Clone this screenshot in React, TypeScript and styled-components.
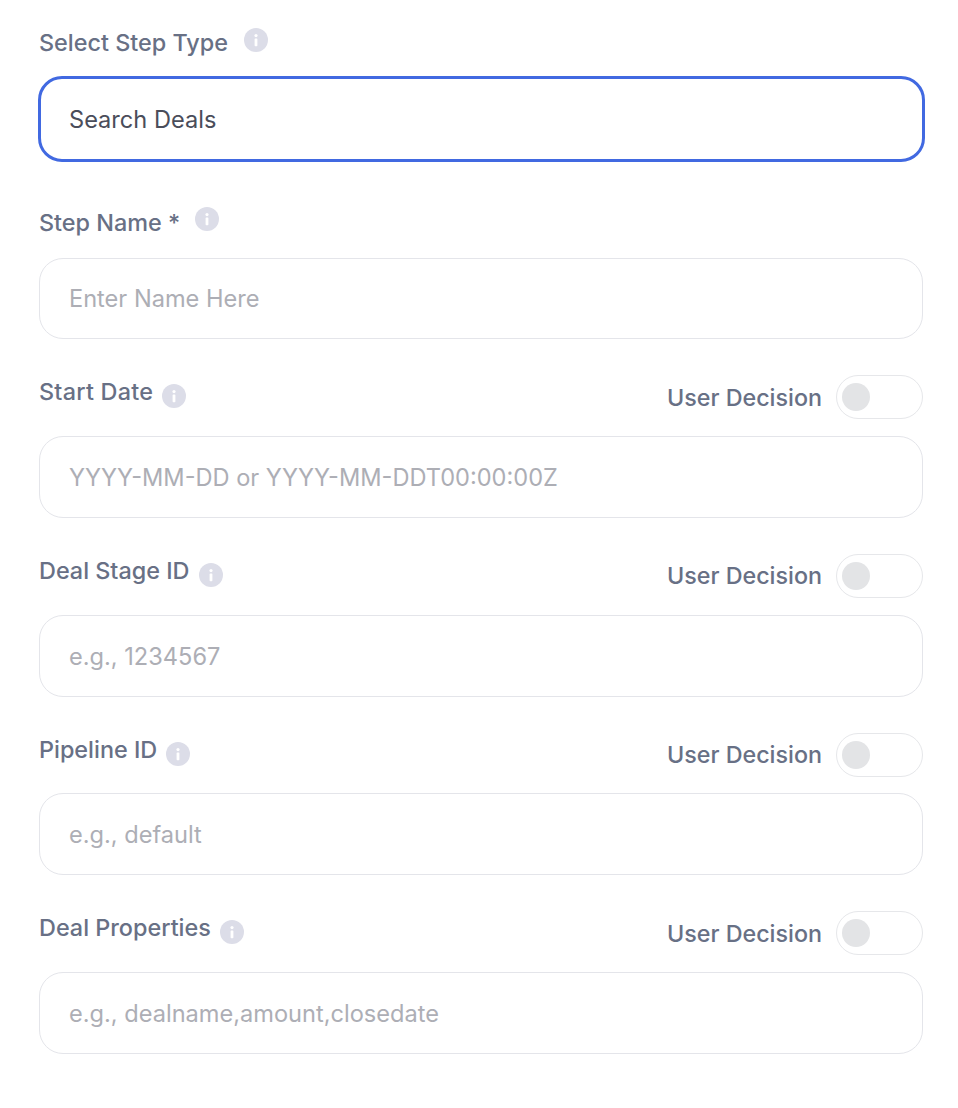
import React from "react";
import styled, { createGlobalStyle } from "styled-components";

const GlobalStyle = createGlobalStyle`
  html, body {
    margin: 0;
    padding: 0;
    background: #fff;
    font-family: "Inter", "Liberation Sans", sans-serif;
  }
`;

const Page = styled.div`
  box-sizing: border-box;
  width: 958px;
  height: 1108px;
  padding: 25px 35px 0 39px;
  display: flex;
  flex-direction: column;
`;

const Field = styled.div<{ $gap: number }>`
  margin-bottom: ${(p) => p.$gap}px;
`;

const LabelRow = styled.div<{ $height: number }>`
  display: flex;
  align-items: flex-start;
  justify-content: space-between;
  height: ${(p) => p.$height}px;
`;

const LabelGroup = styled.div`
  display: flex;
  align-items: flex-start;
`;

const Label = styled.label<{ $top: number; $spacing?: number }>`
  margin-top: ${(p) => p.$top}px;
  font-size: 23.4px;
  line-height: 36px;
  font-weight: 500;
  letter-spacing: ${(p) => p.$spacing ?? 0}px;
  color: #687085;
`;

const InfoIcon = styled.svg<{ $gap: number; $top: number }>`
  width: 24px;
  height: 24px;
  margin-left: ${(p) => p.$gap}px;
  margin-top: ${(p) => p.$top}px;
  flex: none;
`;

const Decision = styled.div`
  display: flex;
  align-items: center;
  gap: 14px;
  height: 44px;
`;

const DecisionText = styled.span`
  font-size: 23.3px;
  font-weight: 500;
  color: #687085;
`;

const Toggle = styled.div`
  box-sizing: border-box;
  width: 87px;
  height: 44px;
  border: 1px solid #e6e7ea;
  border-radius: 22px;
  padding: 7px 5px;
  background: #fff;
`;

const Knob = styled.div`
  width: 28px;
  height: 28px;
  border-radius: 50%;
  background: #e3e4e6;
`;

const Input = styled.input<{ $active?: boolean }>`
  display: block;
  box-sizing: border-box;
  width: ${(p) => (p.$active ? "calc(100% + 3px)" : "100%")};
  height: ${(p) => (p.$active ? 86 : 81.83)}px;
  margin-left: ${(p) => (p.$active ? -1.5 : 0)}px;
  padding: 1px ${(p) => (p.$active ? 28.5 : 29)}px 0;
  border: ${(p) => (p.$active ? "3px solid #4169e1" : "1px solid #e4e5ea")};
  border-radius: 24px;
  background: #fff;
  outline: none;
  font-family: inherit;
  font-size: 23.6px;
  font-feature-settings: "calt" 1;
  color: #4a4d5a;

  &::placeholder {
    color: #adaeb5;
    opacity: 1;
  }
`;

const Info = ({ gap, top }: { gap: number; top: number }) => (
  <InfoIcon $gap={gap} $top={top} viewBox="0 0 24 24">
    <circle cx="12" cy="12" r="12" fill="#dcdde8" />
    <circle cx="12" cy="7.6" r="1.6" fill="#fff" />
    <rect x="10.6" y="10.6" width="2.8" height="7.6" rx="0.8" fill="#fff" />
  </InfoIcon>
);

const UserDecision = () => (
  <Decision>
    <DecisionText>User Decision</DecisionText>
    <Toggle>
      <Knob />
    </Toggle>
  </Decision>
);

const decisionFields = [
  {
    label: "Start Date",
    placeholder: "YYYY-MM-DD or YYYY-MM-DDT00:00:00Z",
    spacing: 0.25,
    gap: 9,
  },
  { label: "Deal Stage ID", placeholder: "e.g., 1234567", gap: 10 },
  { label: "Pipeline ID", placeholder: "e.g., default", gap: 9 },
  { label: "Deal Properties", placeholder: "e.g., dealname,amount,closedate", gap: 9 },
];

export default function App() {
  return (
    <>
      <GlobalStyle />
      <Page>
        <Field $gap={35}>
          <LabelRow $height={51}>
            <LabelGroup>
              <Label $top={0}>Select Step Type</Label>
              <Info gap={16} top={3} />
            </LabelGroup>
          </LabelRow>
          <Input $active readOnly value="Search Deals" />
        </Field>
        <Field $gap={36}>
          <LabelRow $height={60.5}>
            <LabelGroup>
              <Label $top={8}>Step Name *</Label>
              <Info gap={15} top={10} />
            </LabelGroup>
          </LabelRow>
          <Input placeholder="Enter Name Here" />
        </Field>
        {decisionFields.map((f) => (
          <Field $gap={36} key={f.label}>
            <LabelRow $height={60.83}>
              <LabelGroup>
                <Label $top={-1} $spacing={f.spacing}>
                  {f.label}
                </Label>
                <Info gap={f.gap} top={9} />
              </LabelGroup>
              <UserDecision />
            </LabelRow>
            <Input placeholder={f.placeholder} />
          </Field>
        ))}
      </Page>
    </>
  );
}
